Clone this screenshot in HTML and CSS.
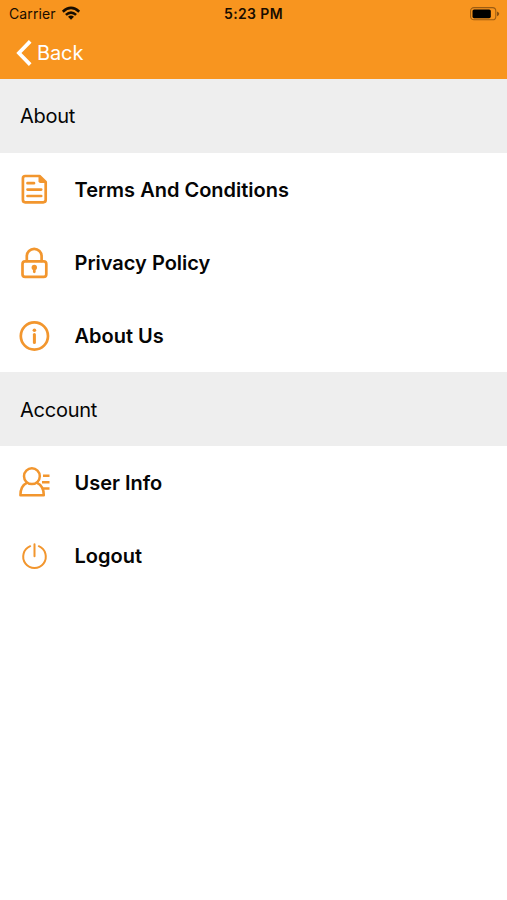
FILE: index.html
```html
<!DOCTYPE html>
<html lang="en">
<head>
<meta charset="utf-8">
<title>Settings</title>
<link rel="stylesheet" href="styles.css">
</head>
<body>
<header class="top">
  <div class="status">
    <div class="carrier"><span>Carrier</span>
      <svg class="wifi" width="20" height="16" viewBox="0 0 20 16"><g fill="none" stroke="#180d00" stroke-width="2.6"><path d="M1.8 5.7Q10-1.9 18.2 5.7"/><path d="M4.9 8.9Q10 4.2 15.1 8.9"/></g><path d="M7 10.8Q10 8.2 13 10.8L10 13.8Z" fill="#180d00"/></svg>
    </div>
    <div class="time">5:23 PM</div>
    <svg class="battery" width="30" height="14" viewBox="0 0 30 14"><rect x="0.6" y=".6" width="25.2" height="12.2" rx="3.4" fill="none" stroke="#9c5c12" stroke-width="1.1"/><rect x="2.5" y="2.4" width="18.3" height="8.8" rx="1.6" fill="#000"/><path d="M27 4.4Q29.2 5 29.2 6.8T27 9.2Z" fill="#8a5010"/></svg>
  </div>
  <nav class="back">
    <svg width="18" height="28" viewBox="0 0 18 28"><path d="M15.2 2.4 3.9 14 15.2 25.6" fill="none" stroke="#fff" stroke-width="3.7"/></svg>
    <span>Back</span>
  </nav>
</header>
<main class="list">
  <h2 class="section about">About</h2>
  <div class="row terms"><svg class="icon" viewBox="0 0 36 36"><path d="M9.2 5H23.5L29.7 11V28.8Q29.7 31.3 27.2 31.3H9.2Q6.9 31.3 6.9 28.8V7.4Q6.9 5 9.2 5Z"/><path class="fill" d="M22.5 5V10.2Q22.5 12 24.5 12H30Z"/><path d="M11.5 12.2H18M11.5 18.6H25.2M11.5 25H25.2"/></svg><span>Terms And Conditions</span></div>
  <div class="row privacy"><svg class="icon" viewBox="0 0 36 36"><rect x="6.5" y="16.3" width="23.8" height="15.6" rx="2.6"/><path d="M10.8 16V11.3A7.4 7.4 0 0 1 25.6 11.3V16"/><circle class="fill" cx="18.3" cy="22.4" r="2.7"/><path d="M18.3 23V26.8"/></svg><span>Privacy Policy</span></div>
  <div class="row aboutus"><svg class="icon" viewBox="0 0 36 36"><circle cx="18.4" cy="18" r="13.6"/><circle class="fill" cx="18.4" cy="12.2" r="1.8"/><path d="M18.4 16.5V24.4" stroke-width="3"/></svg><span>About Us</span></div>
  <h2 class="section account">Account</h2>
  <div class="row user"><svg class="icon thin" viewBox="0 0 36 36"><circle cx="15.9" cy="12.2" r="7.9"/><path d="M11.3 18.6C6.7 20.7 4.4 25 4.4 31.2H27.8C27.8 25 25.2 20.7 20.6 18.6M27 11.7H33.5M26 18.2H33.5M27 24.6H33.5"/></svg><span>User Info</span></div>
  <div class="row logout"><svg class="icon power" viewBox="0 0 36 36"><path d="M14.2 8.2A11.3 11.3 0 1 0 22.8 8.2M18.5 6.2V18.2"/></svg><span>Logout</span></div>
</main>
</body>
</html>
```
FILE: styles.css
```css
* { box-sizing: border-box; }
body { margin: 0; background: #fff; color: #050505; font-family: Inter, "Liberation Sans", sans-serif; }
.top { height: 79.3px; background: #f8951f; }
.status { display: grid; grid-template-columns: 1fr auto 1fr; height: 27px; padding: 0 7px 0 9px; align-items: center; color: #180d00; font-size: 14px; }
.carrier { display: flex; align-items: center; gap: 5px; letter-spacing: .1px; }
.time { margin-right: 2px; font-weight: 600; letter-spacing: .35px; }
.battery { justify-self: end; }
.back { display: flex; align-items: center; height: 51px; padding-left: 15px; gap: 4px; color: #fff; font-size: 20px; letter-spacing: -.1px; }
.list { display: grid; grid-auto-rows: 73.3px; }
.section { display: flex; align-items: center; margin: 0; padding: 1px 0 0 20px; background: #eee; font-size: 20px; font-weight: 400; letter-spacing: -.25px; }
.row { display: flex; align-items: center; padding-left: 16px; gap: 22.5px; font-size: 20px; font-weight: 600; }
.row span { padding-top: 1px; }
.icon { width: 36px; height: 36px; fill: none; stroke: #f2962e; stroke-width: 2.7; stroke-linecap: round; stroke-linejoin: round; }
.icon .fill { fill: #f2962e; stroke: none; }
.thin { stroke-width: 2.5; stroke-linecap: butt; }
.power { stroke-width: 2; }
```
